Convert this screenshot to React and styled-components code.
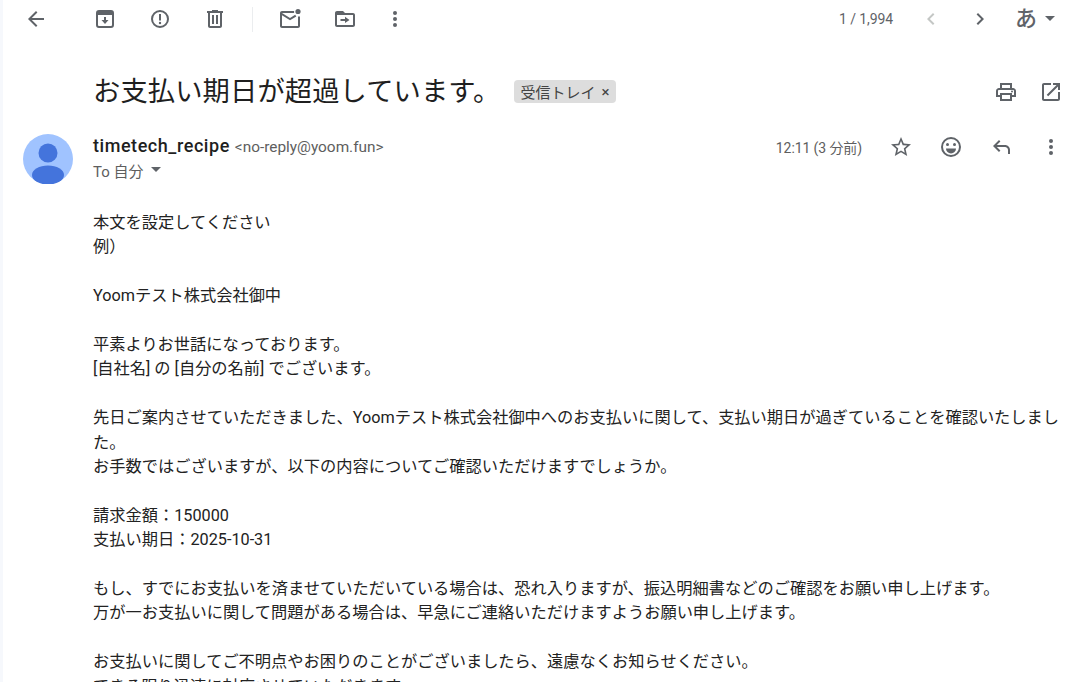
import styled, { createGlobalStyle } from 'styled-components';

const GlobalStyle = createGlobalStyle`
    html, body {
        margin: 0;
        height: 100%;
        overflow: hidden;
        background: #F6F8FC;
    }
`

const Panel = styled.div`
    margin-left: 3px;
    height: 682px;
    overflow: hidden;
    background: #FFFFFF;
    color: #222222;
    font-family: Roboto, "Noto Sans CJK JP", sans-serif;
`

const Toolbar = styled.div`
    height: 38px;
    display: flex;
    align-items: center;
    padding: 0 33px 0 21px;
`

const ToolGroup = styled.div`
    display: flex;
    align-items: center;
    gap: ${props => props.gap || 31}px;
    margin-left: ${props => props.offset || 0}px;
`

const ToolIcon = styled.svg`
    width: 24px;
    height: 24px;
    fill: ${props => props.faded ? '#C4C7C5' : '#5F6368'};
    flex: none;
    display: block;
`

const Divider = styled.div`
    width: 1px;
    height: 25px;
    background: #EBEDEF;
    margin: 0 25px 0 25px;
`

const Counter = styled.span`
    margin-left: auto;
    font-size: 14px;
    letter-spacing: -0.1px;
    color: #5F6368;
`

const LangLabel = styled.span`
    font-size: 22px;
    font-weight: 500;
    color: #5F6368;
    margin-left: 23px;
    line-height: 24px;
`

const Caret = styled.span`
    width: 0;
    height: 0;
    border-left: 5px solid transparent;
    border-right: 5px solid transparent;
    border-top: 5px solid #5F6368;
    margin-left: ${props => props.gap || 8}px;
    margin-top: -2px;
`

const SubjectRow = styled.div`
    height: 48px;
    margin-top: 30px;
    padding: 0 25px 0 90px;
    display: flex;
    align-items: center;
`

const Subject = styled.h1`
    margin: 0 0 6px;
    font-size: 27.3px;
    font-weight: 400;
    color: #1F1F1F;
    white-space: nowrap;
    letter-spacing: 0.1px;
`

const Chip = styled.span`
    display: inline-flex;
    align-items: center;
    height: 23px;
    margin: 0 0 1px 14px;
    padding: 0 7px 0 6px;
    gap: 6px;
    border-radius: 4px;
    background: #DDDDDD;
    font-size: 15px;
    color: #444444;
    white-space: nowrap;
`

const ChipClose = styled.span`
    font-size: 15px;
    color: #444444;
`

const SubjectActions = styled.div`
    margin-left: auto;
    display: flex;
    gap: 21px;
`

const HeaderRow = styled.div`
    display: flex;
    margin-top: 18px;
    padding: 0 24px 0 20px;
`

const Avatar = styled.svg`
    width: 50px;
    height: 50px;
    flex: none;
    display: block;
`

const SenderBlock = styled.div`
    margin-left: 20px;
    flex: 1;
`

const SenderLine = styled.div`
    display: flex;
    align-items: baseline;
    height: 24px;
    line-height: 24px;
`

const SenderName = styled.span`
    font-size: 18px;
    font-weight: 500;
    letter-spacing: 0.55px;
    color: #1F1F1F;
`

const SenderMail = styled.span`
    font-size: 15.4px;
    color: #5E5E5E;
    margin-left: 5px;
`

const ToLine = styled.div`
    display: flex;
    align-items: center;
    height: 24px;
    font-size: 15px;
    color: #5E5E5E;
`

const MetaActions = styled.div`
    display: flex;
    align-items: center;
    height: 26px;
`

const Timestamp = styled.span`
    font-size: 14px;
    letter-spacing: -0.1px;
    color: #5E5E5E;
    margin-right: 27px;
`

const MetaIcons = styled.div`
    display: flex;
    gap: 26px;
    padding-right: 1px;
`

const Body = styled.div`
    margin-top: 27px;
    padding: 0 24px 0 90px;
    font-size: 16.24px;
    line-height: 24.4px;
    color: #222222;
`

const BodyLine = styled.div`
    min-height: 24.4px;
`

const bodyLines = [
    '本文を設定してください',
    '例）',
    '',
    'Yoomテスト株式会社御中',
    '',
    '平素よりお世話になっております。',
    '[自社名] の [自分の名前] でございます。',
    '',
    '先日ご案内させていただきました、Yoomテスト株式会社御中へのお支払いに関して、支払い期日が過ぎていることを確認いたしました。',
    'お手数ではございますが、以下の内容についてご確認いただけますでしょうか。',
    '',
    '請求金額：150000',
    '支払い期日：2025-10-31',
    '',
    'もし、すでにお支払いを済ませていただいている場合は、恐れ入りますが、振込明細書などのご確認をお願い申し上げます。',
    '万が一お支払いに関して問題がある場合は、早急にご連絡いただけますようお願い申し上げます。',
    '',
    'お支払いに関してご不明点やお困りのことがございましたら、遠慮なくお知らせください。',
    'できる限り迅速に対応させていただきます。',
];

const MoreIcon = () => (
    <ToolIcon viewBox="0 0 24 24">
        <circle cx="12" cy="6" r="2" />
        <circle cx="12" cy="12" r="2" />
        <circle cx="12" cy="18" r="2" />
    </ToolIcon>
);

function App() {
    return (
        <>
            <GlobalStyle />
            <Panel>
                <Toolbar>
                    <ToolIcon viewBox="0 0 24 24">
                        <path d="M20 11H7.83l5.59-5.59L12 4l-8 8 8 8 1.41-1.41L7.83 13H20v-2z" />
                    </ToolIcon>
                    <ToolGroup offset={45}>
                        <ToolIcon viewBox="0 0 24 24">
                            <path fillRule="evenodd" d="M6 3h12a3 3 0 0 1 3 3v12a3 3 0 0 1-3 3H6a3 3 0 0 1-3-3V6a3 3 0 0 1 3-3zM5 8v10a1 1 0 0 0 1 1h12a1 1 0 0 0 1-1V8H5z" />
                            <path d="M11 10h2v3h2.5L12 17l-3.5-4H11z" />
                        </ToolIcon>
                        <ToolIcon viewBox="0 0 24 24">
                            <path fillRule="evenodd" d="M12 3a9 9 0 1 1 0 18 9 9 0 0 1 0-18zm0 2a7 7 0 1 0 0 14 7 7 0 0 0 0-14z" />
                            <path d="M11 7h2v6.5h-2z" />
                            <circle cx="12" cy="16" r="1.2" />
                        </ToolIcon>
                        <ToolIcon viewBox="0 0 24 24">
                            <path d="M15 4V3H9v1H4v2h1v13c0 1.1.9 2 2 2h10c1.1 0 2-.9 2-2V6h1V4h-5zm2 15H7V6h10v13z" />
                            <path d="M9 8h2v9H9zm4 0h2v9h-2z" />
                        </ToolIcon>
                    </ToolGroup>
                    <Divider />
                    <ToolGroup>
                        <ToolIcon viewBox="0 0 24 24">
                            <path d="M22 9.5V19c0 1.1-.9 2-2 2H4c-1.1 0-2-.9-2-2V6c0-1.1.9-2 2-2h12.1v2H4l8 5 5.2-3.3 1.1 1.7L12 13.3 4 8.2V19h16V9.5h2z" />
                            <circle cx="20" cy="4.5" r="2.6" />
                        </ToolIcon>
                        <ToolIcon viewBox="0 0 24 24">
                            <path d="M20 6h-8l-2-2H4c-1.1 0-2 .9-2 2v12c0 1.1.9 2 2 2h16c1.1 0 2-.9 2-2V8c0-1.1-.9-2-2-2zm0 12H4V8h16v10z" />
                            <path d="M12 11.9H7.5v2H12V16l4.5-3.1L12 9.8z" />
                        </ToolIcon>
                    </ToolGroup>
                    <ToolGroup offset={26}>
                        <MoreIcon />
                    </ToolGroup>
                    <Counter>1 / 1,994</Counter>
                    <ToolGroup gap={25} offset={26}>
                        <ToolIcon viewBox="0 0 24 24" faded>
                            <path d="M15.41 7.41L14 6l-6 6 6 6 1.41-1.41L10.83 12z" />
                        </ToolIcon>
                        <ToolIcon viewBox="0 0 24 24">
                            <path d="M8.59 16.59L10 18l6-6-6-6-1.41 1.41L13.17 12z" />
                        </ToolIcon>
                    </ToolGroup>
                    <LangLabel>あ</LangLabel>
                    <Caret />
                </Toolbar>
                <SubjectRow>
                    <Subject>お支払い期日が超過しています。</Subject>
                    <Chip>受信トレイ<ChipClose>×</ChipClose></Chip>
                    <SubjectActions>
                        <ToolIcon viewBox="0 0 24 24">
                            <path d="M19 8h-1V3H6v5H5c-1.66 0-3 1.34-3 3v6h4v4h12v-4h4v-6c0-1.66-1.34-3-3-3zM8 5h8v3H8V5zm8 12v2H8v-4h8v2zm2-2v-2H6v2H4v-4c0-.55.45-1 1-1h14c.55 0 1 .45 1 1v4h-2z" />
                            <circle cx="18" cy="11.5" r="1" />
                        </ToolIcon>
                        <ToolIcon viewBox="0 0 24 24">
                            <path d="M19 19H5V5h7V3H5c-1.11 0-2 .9-2 2v14c0 1.1.89 2 2 2h14c1.1 0 2-.9 2-2v-7h-2v7zM14 3v2h3.59l-9.83 9.83 1.41 1.41L19 6.41V10h2V3h-7z" />
                        </ToolIcon>
                    </SubjectActions>
                </SubjectRow>
                <HeaderRow>
                    <Avatar viewBox="0 0 50 50">
                        <circle cx="25" cy="25" r="25" fill="#A0C3FF" />
                        <circle cx="25" cy="19" r="9.5" fill="#4474DC" />
                        <ellipse cx="25" cy="41" rx="16" ry="9.5" fill="#4474DC" />
                    </Avatar>
                    <SenderBlock>
                        <SenderLine>
                            <SenderName>timetech_recipe</SenderName>
                            <SenderMail>&lt;no-reply@yoom.fun&gt;</SenderMail>
                        </SenderLine>
                        <ToLine>To 自分<Caret gap={7} /></ToLine>
                    </SenderBlock>
                    <MetaActions>
                        <Timestamp>12:11 (3 分前)</Timestamp>
                        <MetaIcons>
                            <ToolIcon viewBox="0 0 24 24">
                                <path d="M22 9.24l-7.19-.62L12 2 9.19 8.63 2 9.24l5.46 4.73L5.82 21 12 17.27 18.18 21l-1.63-7.03L22 9.24zM12 15.4l-3.76 2.27 1-4.28-3.32-2.88 4.38-.38L12 6.1l1.71 4.04 4.38.38-3.32 2.88 1 4.28L12 15.4z" />
                            </ToolIcon>
                            <ToolIcon viewBox="0 0 24 24">
                                <path d="M12 2a10 10 0 1 0 0 20 10 10 0 0 0 0-20zm0 18a8 8 0 1 1 0-16 8 8 0 0 1 0 16z" />
                                <circle cx="8.5" cy="9.5" r="1.5" />
                                <circle cx="15.5" cy="9.5" r="1.5" />
                                <path d="M7 13.5h10a5 5 0 0 1-10 0z" />
                            </ToolIcon>
                            <ToolIcon viewBox="0 0 24 24">
                                <path d="M21 19h-2v-4c0-1.65-1.35-3-3-3H7.83l3.58 3.59L10 17l-6-6 6-6 1.41 1.41L7.83 10H16c2.76 0 5 2.24 5 5v4z" />
                            </ToolIcon>
                            <MoreIcon />
                        </MetaIcons>
                    </MetaActions>
                </HeaderRow>
                <Body>
                    {bodyLines.map((line, i) => (
                        <BodyLine key={i}>{line}</BodyLine>
                    ))}
                </Body>
            </Panel>
        </>
    );
}

export default App;
